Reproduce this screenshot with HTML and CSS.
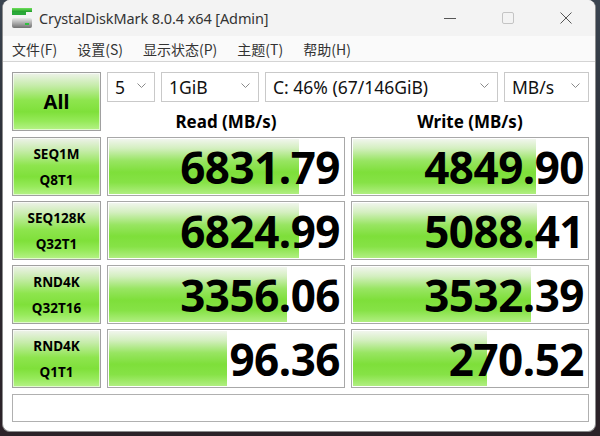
FILE: index.html
```html
<!DOCTYPE html>
<html>
<head>
<meta charset="utf-8">
<link rel="stylesheet" href="styles.css">
</head>
<body>
<div class="window">
  <div class="titlebar">
    <svg class="appicon" width="22" height="22" viewBox="0 0 22 22">
      <defs>
        <linearGradient id="gtop" x1="0" y1="0" x2="0" y2="1">
          <stop offset="0" stop-color="#6fe05a"/>
          <stop offset="1" stop-color="#1e9a2a"/>
        </linearGradient>
        <linearGradient id="gbox" x1="0" y1="0" x2="0" y2="1">
          <stop offset="0" stop-color="#e8e8e8"/>
          <stop offset="1" stop-color="#707070"/>
        </linearGradient>
      </defs>
      <rect x="1" y="1" width="20" height="4" fill="url(#gtop)"/>
      <rect x="1" y="5" width="14" height="3" fill="#2aa83a"/>
      <rect x="1" y="11" width="20" height="10" rx="2" fill="url(#gbox)"/>
      <rect x="14" y="16" width="4" height="2" fill="#30c040"/>
    </svg>
    <span class="title">CrystalDiskMark 8.0.4 x64 [Admin]</span>
    <div class="controls">
      <span class="ctl"><svg width="12" height="12" viewBox="0 0 12 12"><line x1="0" y1="6.5" x2="12" y2="6.5" stroke="#555" stroke-width="1"/></svg></span>
      <span class="ctl"><svg width="12" height="12" viewBox="0 0 12 12"><rect x="0.5" y="0.5" width="11" height="11" rx="1.5" fill="none" stroke="#c4c4c4" stroke-width="1"/></svg></span>
      <span class="ctl"><svg width="12" height="12" viewBox="0 0 12 12"><path d="M0.5 0.5 L11.5 11.5 M11.5 0.5 L0.5 11.5" stroke="#555" stroke-width="1"/></svg></span>
    </div>
  </div>
  <div class="menubar">
    <span class="menu">文件(F)</span>
    <span class="menu">设置(S)</span>
    <span class="menu">显示状态(P)</span>
    <span class="menu">主题(T)</span>
    <span class="menu">帮助(H)</span>
  </div>
  <div class="main">
    <div class="grid">
      <div class="btn all">All</div>
      <div class="selects">
        <div class="select s1"><span>5</span><svg class="chev" width="9" height="5" viewBox="0 0 9 5"><path d="M0.5 0.5 L4.5 4.5 L8.5 0.5" fill="none" stroke="#8a8a8a" stroke-width="1"/></svg></div>
        <div class="select s2"><span>1GiB</span><svg class="chev" width="9" height="5" viewBox="0 0 9 5"><path d="M0.5 0.5 L4.5 4.5 L8.5 0.5" fill="none" stroke="#8a8a8a" stroke-width="1"/></svg></div>
        <div class="select s3"><span>C: 46% (67/146GiB)</span><svg class="chev" width="9" height="5" viewBox="0 0 9 5"><path d="M0.5 0.5 L4.5 4.5 L8.5 0.5" fill="none" stroke="#8a8a8a" stroke-width="1"/></svg></div>
        <div class="select s4"><span>MB/s</span><svg class="chev" width="9" height="5" viewBox="0 0 9 5"><path d="M0.5 0.5 L4.5 4.5 L8.5 0.5" fill="none" stroke="#8a8a8a" stroke-width="1"/></svg></div>
      </div>
      <div class="head">Read (MB/s)</div>
      <div class="head">Write (MB/s)</div>

      <div class="btn label">SEQ1M<br>Q8T1</div>
      <div class="val" style="--fill:191px">6831.79</div>
      <div class="val" style="--fill:184px">4849.90</div>

      <div class="btn label">SEQ128K<br>Q32T1</div>
      <div class="val" style="--fill:191px">6824.99</div>
      <div class="val" style="--fill:185px">5088.41</div>

      <div class="btn label">RND4K<br>Q32T16</div>
      <div class="val" style="--fill:179px">3356.06</div>
      <div class="val" style="--fill:179px">3532.39</div>

      <div class="btn label">RND4K<br>Q1T1</div>
      <div class="val" style="--fill:119px">96.36</div>
      <div class="val" style="--fill:135px">270.52</div>

      <div class="comment"></div>
    </div>
  </div>
</div>
</body>
</html>
```

FILE: styles.css
```css
html, body {
  margin: 0;
  padding: 0;
}
body {
  width: 600px;
  height: 436px;
  overflow: hidden;
  background: linear-gradient(180deg, #3a4450 0%, #2a2c33 40%, #2c2228 100%);
  font-family: "Noto Sans", "Noto Sans CJK SC", sans-serif;
}
.window {
  margin-left: 2px;
  width: 592px;
  height: 431px;
  border: 1px solid #8c8c8c;
  border-top: none;
  border-radius: 8px 8px 8px 8px;
  background: #ffffff;
  overflow: hidden;
  display: flex;
  flex-direction: column;
}
.titlebar {
  height: 36px;
  background: #f3f3f3;
  display: flex;
  align-items: center;
  padding-left: 8px;
}
.appicon {
  margin-right: 6px;
}
.title {
  font-family: "Noto Sans", sans-serif;
  font-size: 14.5px;
  color: #333;
  letter-spacing: -0.1px;
}
.controls {
  margin-left: auto;
  display: flex;
  align-items: center;
}
.ctl {
  width: 58px;
  display: flex;
  justify-content: center;
}
.menubar {
  height: 25px;
  background: #fafafa;
  border-bottom: 1px solid #d4d4d4;
  display: flex;
  align-items: center;
  padding-left: 9px;
}
.menu {
  font-family: "Noto Sans CJK SC", sans-serif;
  font-size: 14px;
  color: #333;
  margin-right: 20px;
}
.main {
  padding: 10px 0 0 9px;
}
.grid {
  display: grid;
  grid-template-columns: 89px 238px 238px;
  grid-template-rows: 30px 25px 59px 59px 59px 59px 29px;
  column-gap: 6px;
  row-gap: 5px;
}
.grid .all {
  grid-row: 1 / span 2;
  margin-bottom: 1px;
}
.selects {
  grid-column: 2 / span 2;
  display: flex;
  gap: 6px;
}
.select {
  box-sizing: border-box;
  height: 30px;
  border: 1px solid #c9c9c9;
  background: #fff;
  display: flex;
  align-items: center;
  justify-content: space-between;
  padding: 0 8px 0 7px;
  font-size: 17.5px;
  color: #111;
}
.s1 { width: 48px; }
.s2 { width: 98px; }
.s3 { width: 233px; }
.s4 { width: 85px; }
.chev {
  margin-top: -4px;
}
.head {
  font-weight: 700;
  font-size: 17px;
  text-align: center;
  color: #000;
  align-self: end;
  line-height: 22px;
  margin-bottom: -1px;
}
.btn {
  box-sizing: border-box;
  border: 1px solid #a0a0a0;
  background: linear-gradient(180deg, #eef2ea 0%, #c6ecaa 22%, #8ee54e 48%, #7fe03a 68%, #96ea5a 85%, #b6f288 100%);
  box-shadow: inset 0 0 0 1px rgba(255,255,255,0.6);
  display: flex;
  align-items: center;
  justify-content: center;
  text-align: center;
  font-weight: 700;
  color: #000;
}
.all {
  font-size: 20px;
}
.label {
  font-size: 13.5px;
  line-height: 26px;
}
.val {
  box-sizing: border-box;
  border: 1px solid #a8a8a8;
  background-color: #fff;
  background-image: linear-gradient(180deg, #f4f6f2 0%, #d4efc0 18%, #98e562 40%, #7edf3a 60%, #86e246 78%, #b4f086 100%);
  background-repeat: no-repeat;
  background-size: var(--fill) 100%;
  box-shadow: inset 0 0 0 1px #fff;
  display: flex;
  align-items: center;
  justify-content: flex-end;
  padding-right: 4px;
  font-weight: 700;
  font-size: 44px;
  letter-spacing: -0.5px;
  color: #000;
  line-height: 1;
}
.comment {
  grid-column: 1 / span 3;
  margin-top: 1px;
  box-sizing: border-box;
  border: 1px solid #b0b0b0;
  background: #fff;
}
```
